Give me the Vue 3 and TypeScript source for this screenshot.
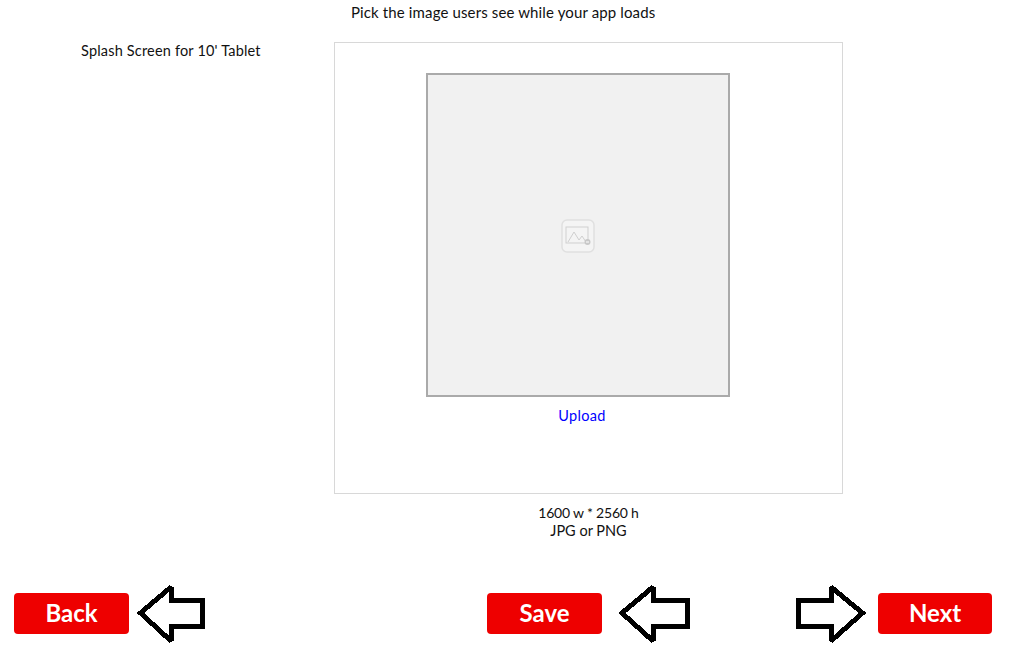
<template>
  <div class="page">
    <p class="title">Pick the image users see while your app loads</p>

    <section class="row">
      <div class="label">Splash Screen for 10' Tablet</div>
      <div class="col">
        <div class="box">
          <div class="preview">
            <svg class="placeholder" width="36" height="36" viewBox="0 0 36 36" fill="none">
              <rect x="2" y="2" width="32" height="32" rx="5" fill="#f4f4f4" stroke="#e0e0e0" stroke-width="1.5" />
              <rect x="6" y="9" width="22" height="16" fill="none" stroke="#cfcfcf" stroke-width="1" />
              <path d="M8 24 L14 14 L19 22 L22 18 L26 24" stroke="#cfcfcf" stroke-width="1" />
              <circle cx="27.5" cy="24" r="3" fill="#c8c8c8" />
              <path d="M26 24 H29" stroke="#fff" stroke-width="1" />
            </svg>
          </div>
          <a class="upload" href="#">Upload</a>
        </div>
        <div class="hint">
          <div class="size">1600 w * 2560 h</div>
          <div>JPG or PNG</div>
        </div>
      </div>
    </section>

    <footer class="actions">
      <div class="group back-group">
        <button class="btn">Back</button>
        <svg class="arrow" width="70" height="60" viewBox="0 0 70 60">
          <path d="M4.5 30 L35 4 V17 H66 V43 H35 V58 Z" />
        </svg>
      </div>
      <div class="group save-group">
        <button class="btn">Save</button>
        <svg class="arrow" width="73" height="60" viewBox="0 0 73 60">
          <path d="M4 30 L35 4 V17 H69 V43 H35 V58 Z" />
        </svg>
      </div>
      <div class="group next-group">
        <svg class="arrow" width="71" height="60" viewBox="0 0 71 60">
          <path d="M67.5 30 L36 4 V17 H3 V43 H36 V58 Z" />
        </svg>
        <button class="btn next">Next</button>
      </div>
    </footer>
  </div>
</template>

<script setup lang="ts">
</script>

<style>
html,
body {
  background: #fff;
}
</style>

<style scoped>
.page {
  width: 1028px;
  height: 655px;
  overflow: hidden;
  font-family: "Lato", "Open Sans", sans-serif;
  font-size: 14.5px;
  color: #111;
}
.title {
  margin: 0;
  height: 42px;
  padding-top: 3px;
  padding-left: 351px;
  line-height: 18px;
  box-sizing: border-box;
  font-size: 15px;
  letter-spacing: 0.13px;
}
.row {
  display: flex;
  align-items: flex-start;
}
.label {
  width: 334px;
  box-sizing: border-box;
  padding-left: 81px;
  flex-shrink: 0;
  line-height: 18px;
  white-space: nowrap;
  letter-spacing: 0.18px;
}
.col {
  width: 509px;
  text-align: center;
}
.box {
  box-sizing: border-box;
  width: 509px;
  height: 452px;
  border: 1px solid #d8d8d8;
  padding-top: 30px;
  padding-left: 91px;
  text-align: left;
}
.preview {
  box-sizing: border-box;
  width: 304px;
  height: 324px;
  background: #f1f1f1;
  border: 2px solid #aaa;
  display: flex;
  align-items: center;
  justify-content: center;
}
.placeholder {
  display: block;
  margin-top: 1px;
}
.upload {
  display: block;
  width: 312px;
  margin-top: 10px;
  text-align: center;
  color: #0000ff;
  text-decoration: none;
  line-height: 18px;
  letter-spacing: 0.3px;
}
.hint {
  margin-top: 10px;
  line-height: 18px;
}
.size {
  font-size: 14px;
  letter-spacing: -0.2px;
}
.actions {
  display: flex;
  align-items: center;
  padding-left: 14px;
  margin-top: 43px;
}
.group {
  display: flex;
  align-items: center;
}
.save-group {
  margin-left: 281px;
}
.next-group {
  margin-left: 104px;
}
.btn {
  width: 115px;
  height: 41px;
  border: none;
  border-radius: 4px;
  background: #ee0000;
  color: #fff;
  font-family: "Lato", sans-serif;
  font-size: 24px;
  font-weight: 700;
  padding: 0 0 2px;
}
.next {
  width: 114px;
  margin-left: 12px;
}
.arrow {
  display: block;
  margin-left: 7px;
  flex-shrink: 0;
}
.next-group .arrow {
  margin-left: 0;
}
.save-group .arrow {
  margin-left: 16px;
}
.arrow path {
  fill: #fff;
  stroke: #000;
  stroke-width: 5;
  stroke-linejoin: miter;
  stroke-miterlimit: 2;
  shape-rendering: crispEdges;
}
</style>
